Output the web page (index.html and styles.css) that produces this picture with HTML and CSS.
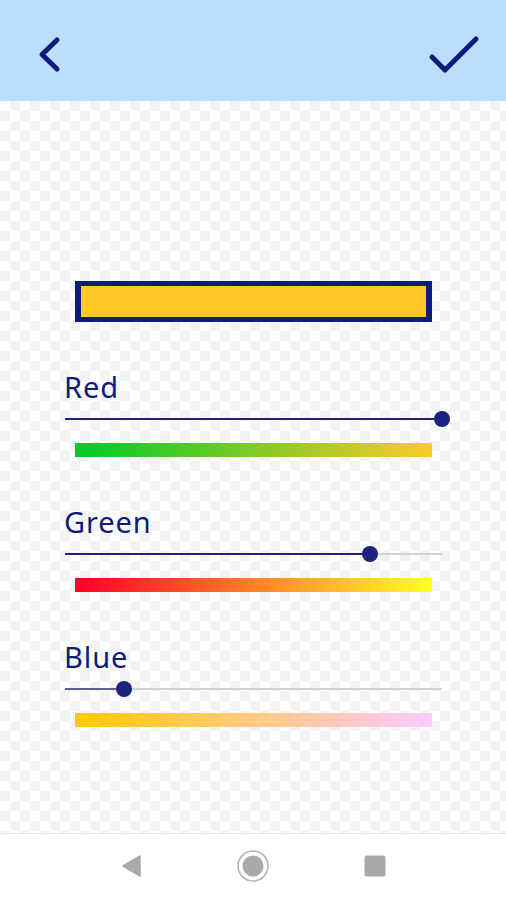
FILE: index.html
```html
<!DOCTYPE html>
<html>
<head>
<meta charset="utf-8">
<link rel="stylesheet" href="styles.css">
</head>
<body>
<div class="app">
  <header class="topbar">
    <svg class="icon-back" width="30" height="40" viewBox="0 0 30 40">
      <path d="M19 5 L4 19.5 L19 34" fill="none" stroke="#0d1b7e" stroke-width="5" stroke-linecap="round" stroke-linejoin="round"/>
    </svg>
    <svg class="icon-check" width="54" height="44" viewBox="0 0 54 44">
      <path d="M4 22 L17 35 L48 4" fill="none" stroke="#0d1b7e" stroke-width="5" stroke-linecap="round" stroke-linejoin="round"/>
    </svg>
  </header>
  <main class="content">
    <div class="swatch"><div class="swatch-inner"></div></div>
    <section class="channel">
      <div class="label">Red</div>
      <div class="slider">
        <div class="track"></div>
        <div class="active" style="width:100%"></div>
        <div class="thumb" style="left:100%"></div>
      </div>
      <div class="bar bar-red"></div>
    </section>
    <section class="channel">
      <div class="label">Green</div>
      <div class="slider">
        <div class="track"></div>
        <div class="active" style="width:80.8%"></div>
        <div class="thumb" style="left:80.8%"></div>
      </div>
      <div class="bar bar-green"></div>
    </section>
    <section class="channel">
      <div class="label">Blue</div>
      <div class="slider">
        <div class="track"></div>
        <div class="active light" style="width:15.7%"></div>
        <div class="thumb" style="left:15.7%"></div>
      </div>
      <div class="bar bar-blue"></div>
    </section>
  </main>
  <nav class="navbar">
    <svg width="22" height="24" viewBox="0 0 22 24"><path d="M19 2 L19 22 L2 12 Z" fill="#a9a9a9" stroke="#a9a9a9" stroke-width="1.5" stroke-linejoin="round"/></svg>
    <svg width="34" height="34" viewBox="0 0 34 34"><circle cx="17" cy="17" r="15" fill="none" stroke="#b5b5b5" stroke-width="1.6"/><circle cx="17" cy="17" r="10.5" fill="#a9a9a9"/></svg>
    <svg width="24" height="24" viewBox="0 0 24 24"><rect x="1.5" y="1.5" width="21" height="21" rx="2.5" fill="#a9a9a9"/></svg>
  </nav>
</div>
</body>
</html>
```
FILE: styles.css
```css
* { box-sizing: border-box; }
html, body { margin: 0; padding: 0; }
body {
  width: 506px;
  height: 900px;
  overflow: hidden;
  font-family: "Noto Sans", "DejaVu Sans", sans-serif;
}
.app {
  display: flex;
  flex-direction: column;
  height: 900px;
}
.topbar {
  height: 101px;
  background: #bbdefb;
  display: flex;
  align-items: center;
  justify-content: space-between;
  padding: 0 24px 0 38px;
  flex-shrink: 0;
}
.icon-back { margin-top: 8px; }
.icon-check { margin-top: 12px; }
.content {
  flex: 1;
  background-color: #ffffff;
  background-image:
    conic-gradient(#f3f3f3 25%, #ffffff 25% 50%, #f3f3f3 50% 75%, #ffffff 75%);
  background-size: 20px 20px;
  display: flex;
  flex-direction: column;
  gap: 49px;
  padding: 180px 0 0 0;
}
.swatch {
  margin: 0 74px 0 75px;
  height: 41px;
  background: #0d1b7e;
  padding: 5px 6px;
}
.swatch-inner {
  height: 100%;
  background: #ffca28;
}
.channel {
  display: flex;
  flex-direction: column;
  padding: 0 64px 0 65px;
}
.label {
  font-size: 29px;
  line-height: 32px;
  color: #0d1b7e;
  font-weight: 400;
  margin-left: -1px;
  letter-spacing: 0.9px;
}
.slider {
  position: relative;
  height: 16px;
  margin-top: 8px;
}
.track {
  position: absolute;
  left: 0; right: 0; top: 7px;
  height: 2px;
  background: #d2d2d2;
}
.active {
  position: absolute;
  left: 0; top: 7px;
  height: 2px;
  background: #1a237e;
}
.active.light { background: #5a6192; }
.thumb {
  position: absolute;
  top: 0;
  width: 16px;
  height: 16px;
  margin-left: -8px;
  border-radius: 50%;
  background: #1a237e;
}
.bar {
  height: 14px;
  margin: 16px 10px 0 10px;
}
.bar-red { background: linear-gradient(to right, rgb(0,202,40), rgb(255,202,40)); }
.bar-green { background: linear-gradient(to right, rgb(255,0,40), rgb(255,255,40)); }
.bar-blue { background: linear-gradient(to right, rgb(255,202,0), rgb(255,202,255)); }
.navbar {
  height: 67px;
  flex-shrink: 0;
  background: #ffffff;
  border-top: 1px solid #e6e6e6;
  display: flex;
  align-items: center;
  justify-content: center;
  gap: 93px;
  padding-bottom: 2px;
  padding-left: 2px;
}
```
